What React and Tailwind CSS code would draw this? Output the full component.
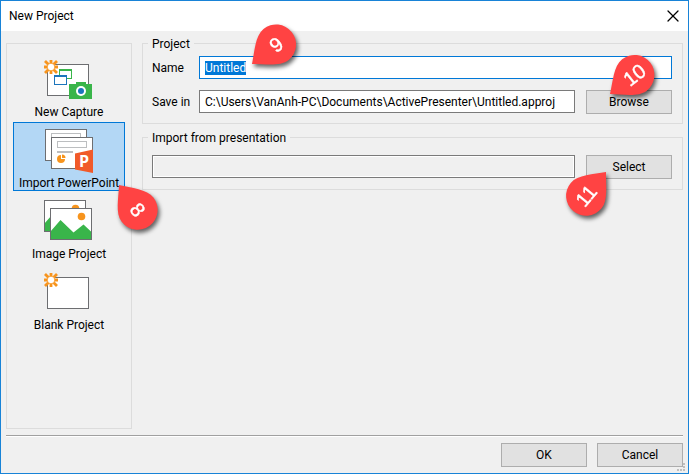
import { X } from 'lucide-react';

const buttonClass = 'h-6 w-[86px] shrink-0 border border-[#adadad] bg-[#e1e1e1] text-center leading-4';

function Burst() {
  return (
    <g>
      <g stroke="#f7941d" strokeWidth="2.8">
        <path d="M7 4v14M0 11h14M1 5l12 12M13 5L1 17" />
      </g>
      <circle cx="7" cy="11" r="3.8" fill="#fff" stroke="#f7941d" strokeWidth="0.8" />
    </g>
  );
}

function CaptureIcon() {
  return (
    <svg width="50" height="48" viewBox="0 0 50 48" fill="none">
      <rect x="3.5" y="8.5" width="41" height="31" fill="#fff" stroke="#6d6e71" />
      <rect x="15.5" y="13.5" width="12" height="9" stroke="#39b54a" />
      <path d="M15 14h13" stroke="#39b54a" strokeWidth="2" />
      <rect x="10.5" y="19.5" width="12" height="9" fill="#fff" stroke="#1c75bc" />
      <path d="M10 20h13" stroke="#1c75bc" strokeWidth="2" />
      <path d="M25 28h7v-2h10v2h6v15H25z" fill="#39b54a" />
      <circle cx="37" cy="35" r="5" fill="#fff" />
      <circle cx="37" cy="35" r="3" fill="#1c75bc" />
      <Burst />
    </svg>
  );
}

function PowerPointIcon() {
  return (
    <svg width="50" height="48" viewBox="0 0 50 48" fill="none">
      <rect x="1.5" y="2.5" width="41" height="31" fill="#fff" stroke="#6d6e71" />
      <rect x="7.5" y="6.5" width="29" height="6" stroke="#bcbec0" />
      <rect x="7.5" y="10.5" width="41" height="31" fill="#fff" stroke="#6d6e71" />
      <rect x="13.5" y="14.5" width="29" height="6" stroke="#bcbec0" />
      <path d="M13 25h16" stroke="#bcbec0" strokeWidth="2" />
      <path d="M17 28a4 4 0 1 0 4 4h-4z" fill="#f7941d" />
      <path d="M18 27.5a3.5 3.5 0 0 1 3.5 3.5H18z" fill="#f7941d" />
      <path d="M31 26.5l18-4V46l-18-3.5z" fill="#f15a29" />
      <text x="40" y="40" textAnchor="middle" fontSize="16" fontWeight="700" fill="#fff" className="font-['Open_Sans',sans-serif]">P</text>
    </svg>
  );
}

function ImageIcon() {
  return (
    <svg width="50" height="48" viewBox="0 0 50 48" fill="none">
      {[0, 6].map((x) => (
        <g key={x} transform={x ? 'translate(6 8)' : undefined}>
          <rect x="0.5" y="2.5" width="41" height="31" fill="#fff" />
          <circle cx="31.5" cy="10.5" r="3.8" fill="#f7941d" />
          <path d="M0.5 25.5L10.5 14l13 12.5 10-8 8 7.5v7.5h-41z" fill="#39b54a" />
          <rect x="0.5" y="2.5" width="41" height="31" stroke="#6d6e71" />
        </g>
      ))}
    </svg>
  );
}

function BlankIcon() {
  return (
    <svg width="50" height="48" viewBox="0 0 50 48" fill="none">
      <rect x="3.5" y="8.5" width="41" height="31" fill="#fff" stroke="#6d6e71" />
      <Burst />
    </svg>
  );
}

const projectTypes = [
  { icon: CaptureIcon, label: 'New Capture' },
  { icon: PowerPointIcon, label: 'Import PowerPoint', selected: true },
  { icon: ImageIcon, label: 'Image Project' },
  { icon: BlankIcon, label: 'Blank Project' },
];

// The marker's tip sits at the svg centre; angle turns the drop, turn keeps the number readable.
const markers = [
  { number: 8, angle: 53, turn: 53, place: 'left-[78px] top-[144px]' },
  { number: 9, angle: -39, turn: -39, place: 'left-[211px] top-[23px]' },
  { number: 10, angle: -38, turn: -38, place: 'right-[38px] top-[53px]' },
  { number: 11, angle: 130, turn: -50, place: 'right-[42px] top-[131px]' },
];

function Marker({ number, angle, turn, place }) {
  const rad = (angle * Math.PI) / 180;
  const x = 40 + 31 * Math.cos(rad);
  const y = 40 + 31 * Math.sin(rad);
  return (
    <svg className={`pointer-events-none absolute overflow-visible drop-shadow-[2px_3px_2px_rgba(0,0,0,0.6)] ${place}`} width="80" height="80" viewBox="0 0 80 80">
      <path d="M40 40C50 32 60 20 71 20A20 20 0 0 1 71 60C60 60 50 48 40 40z" fill="#ff4343" transform={`rotate(${angle} 40 40)`} />
      <text x={x} y={y} dy="7" textAnchor="middle" fontSize="20" fill="#fff" stroke="#fff" strokeWidth="0.4" className="font-['Liberation_Sans',sans-serif]" transform={`rotate(${turn} ${x} ${y})`}>
        {number}
      </text>
    </svg>
  );
}

export default function App() {
  return (
    <div className="relative flex min-h-screen flex-col border border-[#1883d7] bg-[#f0f0f0] font-['Roboto','Noto_Sans',sans-serif] text-[12px] leading-4 text-black">
      <header className="flex h-[30px] items-center justify-between bg-white pr-[5px] pl-2">
        <h1>New Project</h1>
        <button type="button" aria-label="Close">
          <X size={20} strokeWidth={1.5} />
        </button>
      </header>

      <main className="flex flex-1 gap-[10px] px-[5px] pt-3">
        <nav className="flex w-[126px] shrink-0 flex-col gap-[2px] border border-[#dcdcdc] px-[6px] pt-[7px]">
          {projectTypes.map((type) => (
            <button
              key={type.label}
              type="button"
              aria-pressed={!!type.selected}
              className={`flex h-[69px] flex-col items-center border pt-1 leading-[17px] whitespace-nowrap [&>svg]:shrink-0 ${type.selected ? 'border-[#0078d7] bg-[#b3d7f5]' : 'border-transparent'}`}
            >
              <type.icon />
              {type.label}
            </button>
          ))}
        </nav>

        <form className="flex min-w-0 flex-1 flex-col gap-[13px]">
          <section aria-label="Project" className="h-[81px] border border-[#dcdcdc] pr-[10px] pl-[9px]">
            <h2 className="-mt-2 -ml-1 w-fit bg-[#f0f0f0] px-1">Project</h2>
            <div className="mt-1 flex items-center">
              <label htmlFor="name" className="w-[47px]">Name</label>
              <input id="name" defaultValue="Untitled" autoFocus onFocus={(e) => e.target.select()} className="h-[23px] min-w-0 flex-1 border border-[#0078d7] bg-white px-[5px] outline-none selection:bg-[#0078d7] selection:text-white" />
            </div>
            <div className="mt-[11px] flex items-start">
              <label htmlFor="folder" className="w-[47px] pt-1">Save in</label>
              <input id="folder" defaultValue="C:\Users\VanAnh-PC\Documents\ActivePresenter\Untitled.approj" className="mr-[11px] h-[23px] min-w-0 flex-1 border border-[#7a7a7a] bg-white px-[5px] outline-none" />
              <button type="button" className={buttonClass}>Browse</button>
            </div>
          </section>

          <section aria-label="Import from presentation" className="h-[53px] border border-[#dcdcdc] pr-[10px] pl-[9px]">
            <h2 className="-mt-2 -ml-1 w-fit bg-[#f0f0f0] px-1">Import from presentation</h2>
            <div className="mt-[9px] flex items-start">
              <input aria-label="Presentation" readOnly className="mr-[11px] h-[23px] min-w-0 flex-1 border border-[#7a7a7a] bg-[#f0f0f0] shadow-[inset_0_0_0_1px_#fff] outline-none" />
              <button type="button" className={buttonClass}>Select</button>
            </div>
          </section>
        </form>
      </main>

      <footer className="mx-[5px] mt-[6px] flex justify-end gap-[10px] border-t border-[#a0a0a0] pt-[7px] pb-[6px] shadow-[inset_0_1px_0_#fff]">
        <button type="button" className={buttonClass}>OK</button>
        <button type="button" className={buttonClass}>Cancel</button>
      </footer>

      <svg className="absolute right-[3px] bottom-[2px]" width="8" height="8" viewBox="0 0 8 8" fill="#bfbfbf">
        <path d="M0 6h2v2H0zM3 6h2v2H3zM6 6h2v2H6zM6 3h2v2H6zM6 0h2v2H6z" />
      </svg>

      {markers.map((marker) => (
        <Marker key={marker.number} {...marker} />
      ))}
    </div>
  );
}
